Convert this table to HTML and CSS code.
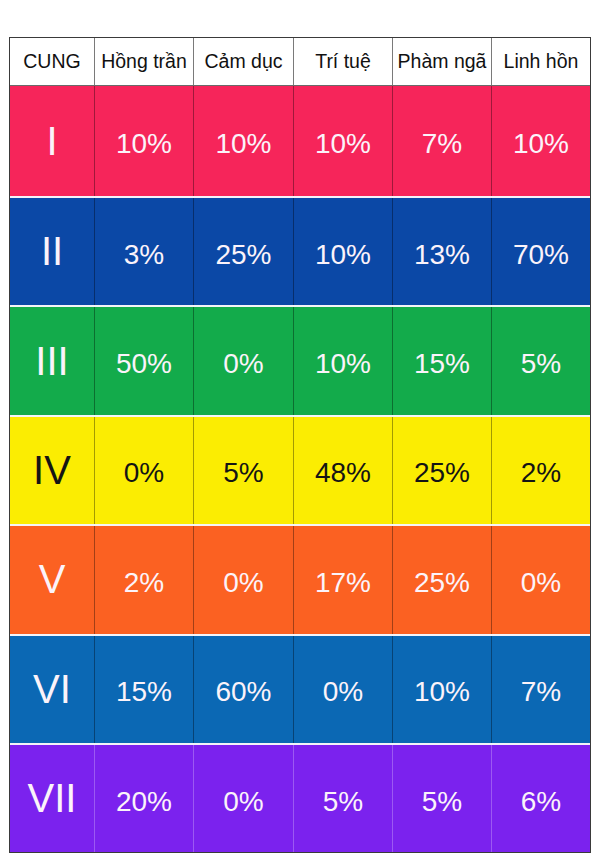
FILE: index.html
```html
<!DOCTYPE html>
<html lang="vi">
<head>
<meta charset="utf-8">
<title>Cung</title>
<link rel="stylesheet" href="styles.css">
</head>
<body>
<div class="table">
  <div class="row head">
    <div class="cell">CUNG</div>
    <div class="cell">Hồng trần</div>
    <div class="cell">Cảm dục</div>
    <div class="cell">Trí tuệ</div>
    <div class="cell">Phàm ngã</div>
    <div class="cell">Linh hồn</div>
  </div>
  <div class="row r1">
    <div class="cell num">I</div>
    <div class="cell">10%</div><div class="cell">10%</div><div class="cell">10%</div><div class="cell">7%</div><div class="cell">10%</div>
  </div>
  <div class="row r2">
    <div class="cell num">II</div>
    <div class="cell">3%</div><div class="cell">25%</div><div class="cell">10%</div><div class="cell">13%</div><div class="cell">70%</div>
  </div>
  <div class="row r3">
    <div class="cell num">III</div>
    <div class="cell">50%</div><div class="cell">0%</div><div class="cell">10%</div><div class="cell">15%</div><div class="cell">5%</div>
  </div>
  <div class="row r4">
    <div class="cell num">IV</div>
    <div class="cell">0%</div><div class="cell">5%</div><div class="cell">48%</div><div class="cell">25%</div><div class="cell">2%</div>
  </div>
  <div class="row r5">
    <div class="cell num">V</div>
    <div class="cell">2%</div><div class="cell">0%</div><div class="cell">17%</div><div class="cell">25%</div><div class="cell">0%</div>
  </div>
  <div class="row r6">
    <div class="cell num">VI</div>
    <div class="cell">15%</div><div class="cell">60%</div><div class="cell">0%</div><div class="cell">10%</div><div class="cell">7%</div>
  </div>
  <div class="row r7">
    <div class="cell num">VII</div>
    <div class="cell">20%</div><div class="cell">0%</div><div class="cell">5%</div><div class="cell">5%</div><div class="cell">6%</div>
  </div>
</div>
</body>
</html>
```

FILE: styles.css
```css
html, body {
  margin: 0;
  padding: 0;
  background: #ffffff;
}
body {
  padding: 37px 0 0 9px;
  font-family: "Liberation Sans", Arial, sans-serif;
}
.table {
  width: 580px;
  border: 1px solid #3a3a3a;
  display: flex;
  flex-direction: column;
}
.row {
  display: grid;
  grid-template-columns: 84px 99px 100px 99px 99px 99px;
  height: 107.4px;
  border-top: 2px solid #f4f4f8;
  color: #fbf3fa;
  font-size: 28px;
}
.row.head {
  height: 47px;
  border-top: none;
  border-bottom: 1px solid #6a6a6a;
  background: #ffffff;
  color: #111111;
  font-size: 19.5px;
}
.row.r1 {
  border-top: none;
  height: 110px;
  background: #f6255a;
}
.cell {
  display: flex;
  align-items: center;
  justify-content: center;
  border-left: 1px solid rgba(0, 0, 0, 0.35);
  padding-top: 6px;
  box-sizing: border-box;
  white-space: nowrap;
}
.cell:first-child {
  border-left: none;
}
.head .cell {
  padding-top: 0;
  border-left-color: #7a7a7a;
}
.num {
  font-size: 40px;
  padding-top: 0;
}
.r2 { background: #0b48a6; }
.r3 { background: #13ab4b; }
.r4 { background: #fbed02; color: #141414; }
.r5 { background: #fb6122; }
.r6 { background: #0b68b4; }
.r7 { background: #7b22ee; }
.r7 .cell { border-left-color: rgba(255, 255, 255, 0.25); }
.r7 .cell:first-child { border-left: none; }
```
